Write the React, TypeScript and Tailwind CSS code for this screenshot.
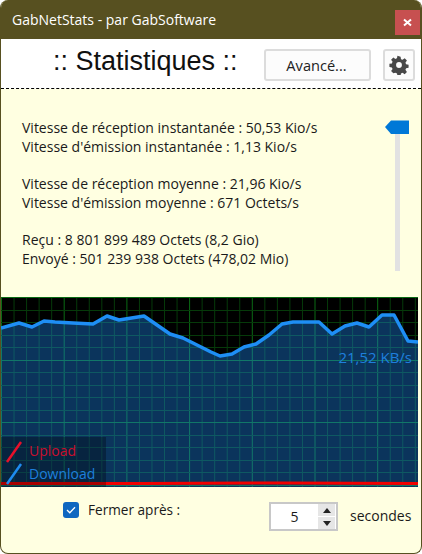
import React from "react";

const pts: [number, number][] = [
  [1, 328], [19, 323], [32, 327], [44, 321], [55, 322], [73, 323], [93, 324], [107, 316], [119, 320], [144, 316],
  [170, 334], [183, 338], [211, 352], [220, 356], [232, 354], [244, 347], [256, 344], [269, 335], [282, 324],
  [293, 322], [319, 322], [332, 334], [345, 326], [357, 323], [369, 327], [382, 315], [394, 315], [408, 341], [418, 342],
];

function Chart() {
  const Y0 = 297;
  const W = 417;
  const H = 190;
  const line = pts.map(([x, y]) => `${x - 1},${y - Y0}`).join(" ");
  const vs: number[] = [];
  for (let i = 0; i * 12.54 < W; i++) vs.push(i);
  const hs: number[] = [];
  for (let i = 0; i * 12.5 < H; i++) hs.push(i);
  return (
    <div className="relative h-[190px] w-[417px] bg-black">
      <svg width={W} height={H} className="block">
        {vs.map((i) => (
          <line key={i} x1={i * 12.54 + 0.5} x2={i * 12.54 + 0.5} y1={0} y2={H} stroke={i % 5 === 0 ? "#0a6a14" : "#063a0a"} />
        ))}
        {hs.map((i) => (
          <line key={i} y1={Math.round(i * 12.5) + 0.5} y2={Math.round(i * 12.5) + 0.5} x1={0} x2={W} stroke={i % 5 === 0 ? "#0a6a14" : "#063a0a"} />
        ))}
        <polygon points={`0,${H} ${line} 417,${H}`} fill="#1e90ff" fillOpacity={0.36} />
        <polyline points={line} fill="none" stroke="#1e8ef5" strokeWidth={3.5} strokeLinejoin="round" />
        <path d={`M0 ${H - 3.5} L140 ${H - 3.5} L280 ${H - 4} L417 ${H - 3.5}`} fill="none" stroke="#f00000" strokeWidth={3} />
      </svg>
      <div className="absolute right-[6px] top-[51px] whitespace-nowrap text-[15px] leading-[18px] text-[#1e7fdc]">21,52 KB/s</div>
      <div className="absolute bottom-0 left-0 h-[50px] w-[105px] bg-black/30">
        <svg width={24} height={50} className="absolute left-0 top-0">
          <line x1={6} y1={25} x2={20} y2={5} stroke="#e8102a" strokeWidth={2.5} />
          <line x1={6} y1={47} x2={20} y2={27} stroke="#1e8cf0" strokeWidth={2.5} />
        </svg>
        <div className="absolute left-[28px] top-[5px] text-[14px] leading-[18px] text-[#c8102e]">Upload</div>
        <div className="absolute left-[28px] top-[28px] text-[14px] leading-[18px] text-[#1e7fdc]">Download</div>
      </div>
    </div>
  );
}

export default function App() {
  return (
    <div className="flex h-[554px] w-[422px] flex-col overflow-hidden rounded-[8px] border-x border-b border-[#575020] bg-[#ffffe1] font-['Open_Sans',sans-serif] text-[#1a1a1a]">
      <div className="-mx-px flex h-[39px] shrink-0 items-start justify-between bg-[#575020] pl-[12px]">
        <span className="pt-[10px] text-[14px] leading-[20px] text-white">GabNetStats - par GabSoftware</span>
        <div className="mr-[2px] mt-[10px] flex h-[25px] w-[25px] items-center justify-center bg-[#c75050]">
          <svg width="9" height="9" viewBox="0 0 9 9"><path d="M1 1.500 L8 7.500 M8 1.500 L1 7.500" stroke="#fff" strokeWidth="2" /></svg>
        </div>
      </div>
      <div className="flex h-[50px] shrink-0 items-start border-b border-dashed border-black bg-white pt-[10px]">
        <div className="w-[263px] pl-[52px] font-['Liberation_Sans',sans-serif] text-[27px] leading-[24px] text-[#101010] whitespace-nowrap">:: Statistiques ::</div>
        <button className="h-[32px] w-[107px] rounded-[3px] border-2 border-[#dcdcdc] bg-[#fcfcfc] pr-[2px] text-[14.600px] leading-[28px] text-[#222]">Avancé...</button>
        <button className="ml-[12px] flex h-[32px] w-[32px] items-center justify-center rounded-[3px] border-2 border-[#dcdcdc] bg-[#fcfcfc]">
          <svg width="20" height="20" viewBox="0 0 24 24" fill="#484848"><path fillRule="evenodd" d="M13.900 2 14.400 5a7.400 7.400 0 0 1 1.900.8l2.500-1.800 2.700 2.700-1.800 2.500c.4.6.6 1.200.8 1.900l3 .5v3.800l-3 .5a7.400 7.400 0 0 1-.8 1.900l1.800 2.500-2.700 2.700-2.500-1.800a7.400 7.400 0 0 1-1.900.8l-.5 3h-3.800l-.5-3a7.400 7.400 0 0 1-1.900-.8L5.200 22 2.500 19.300l1.800-2.500a7.400 7.400 0 0 1-.8-1.900l-3-.5v-3.800l3-.5c.2-.7.4-1.300.8-1.900L2.500 5.700 5.200 3l2.500 1.800a7.400 7.400 0 0 1 1.900-.8l.5-3zM12 8.500a3.500 3.500 0 1 0 0 7 3.500 3.500 0 0 0 0-7z" /></svg>
        </button>
      </div>
      <div className="flex h-[208px] shrink-0 justify-between pt-[29px]">
        <div className="pl-[21px] text-[14px] leading-[19px]">
          <div>Vitesse de réception instantanée : 50,53 Kio/s</div>
          <div>Vitesse d'émission instantanée : 1,13 Kio/s</div>
          <div className="mt-[18px]">Vitesse de réception moyenne : 21,96 Kio/s</div>
          <div>Vitesse d'émission moyenne : 671 Octets/s</div>
          <div className="mt-[18px]">Reçu : 8 801 899 489 Octets (8,2 Gio)</div>
          <div>Envoyé : 501 239 938 Octets (478,02 Mio)</div>
        </div>
        <div className="mr-[12px] flex w-[24px] flex-col items-center">
          <svg width="24" height="14" viewBox="0 0 24 14" className="mt-[2px] shrink-0"><path d="M0 7 6 0.500H24V14H6Z" fill="#0078d7" /></svg>
          <div className="h-[137px] w-[5px] bg-[#e2e2e2]" />
        </div>
      </div>
      <Chart />
      <div className="flex flex-1 items-start pl-[62px] pt-[15px]">
        <span className="flex h-[16px] w-[16px] items-center justify-center rounded-[3px] bg-[#0f67c0]">
          <svg width="10" height="8" viewBox="0 0 10 8"><path d="M1 4 3.800 6.800 9 1.200" fill="none" stroke="#fff" strokeWidth="1.300" /></svg>
        </span>
        <span className="ml-[9px] w-[181px] whitespace-nowrap text-[13.600px] leading-[16px]">Fermer après :</span>
        <div className="flex h-[29px] w-[69px] items-center border-2 border-[#c8c8c8] bg-white">
          <span className="flex-1 text-center text-[14px]">5</span>
          <div className="mr-[1px] flex w-[17px] flex-col gap-[1px]">
            <span className="flex h-[12px] items-center justify-center bg-[#e6e6e6]"><svg width="8" height="5"><path d="M0 5 4 0 8 5Z" fill="#222" /></svg></span>
            <span className="flex h-[12px] items-center justify-center bg-[#e6e6e6]"><svg width="8" height="5"><path d="M0 0 4 5 8 0Z" fill="#222" /></svg></span>
          </div>
        </div>
        <span className="ml-[12px] mt-[6px] text-[14px] leading-[16px]">secondes</span>
      </div>
    </div>
  );
}
